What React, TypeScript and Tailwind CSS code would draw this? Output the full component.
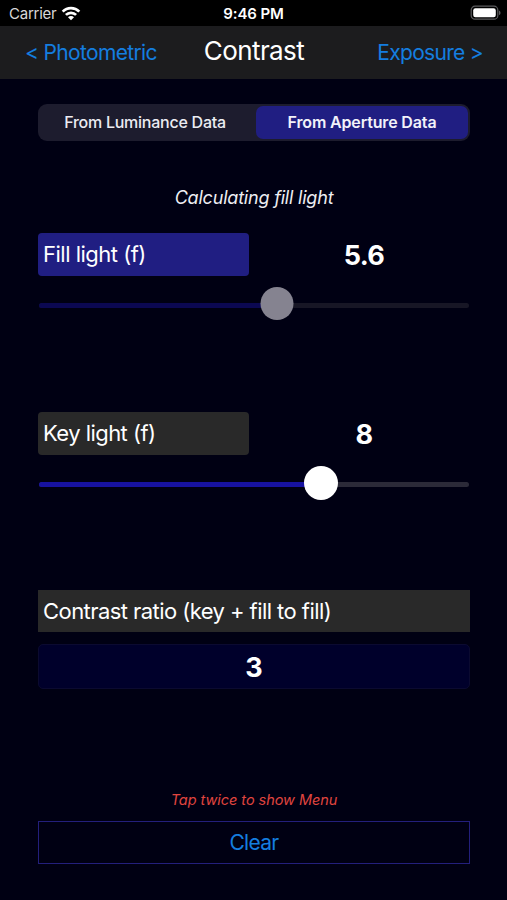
import React from "react";

function WifiIcon() {
  return (
    <svg width="20" height="15" viewBox="0 0 20 15" className="ml-[5px] shrink-0">
      <g fill="none" stroke="#fff" strokeWidth="2.7">
        <path d="M1.7 5.6a11.6 11.6 0 0 1 16.6 0" />
        <path d="M4.9 8.9a7.2 7.2 0 0 1 10.2 0" />
      </g>
      <path d="M10 14.2 7 11.2a4.2 4.2 0 0 1 6 0z" fill="#fff" />
    </svg>
  );
}

function BatteryIcon() {
  return (
    <svg width="32" height="16" viewBox="0 0 32 16" className="shrink-0">
      <rect x="1.2" y="1.2" width="26.6" height="13" rx="3.8" fill="none" stroke="#5c5c5e" strokeWidth="1.2" />
      <rect x="3.2" y="3.2" width="22.6" height="9" rx="2.2" fill="#fff" />
      <path d="M29 5.4c2 .8 2 4 0 4.7z" fill="#5c5c5e" />
    </svg>
  );
}

type SliderProps = { value: number; fill: string; rest: string; thumb: string };

function Slider({ value, fill, rest, thumb }: SliderProps) {
  return (
    <div className="relative flex h-[33px] items-center">
      <div className={`mx-px mt-[3px] h-[5px] flex-1 overflow-hidden rounded-full ${rest}`}>
        <div className={`h-full ${fill}`} style={{ width: `${value - 1}px` }} />
      </div>
      <div
        className={`absolute top-0 -translate-x-1/2 rounded-full ${thumb}`}
        style={{ left: `${value}px` }}
      />
    </div>
  );
}

type FieldProps = { label: string; value: string; color: string; tracking: string };

function Field({ label, value, color, tracking }: FieldProps) {
  return (
    <div className="flex h-[43px] items-center">
      <div className={`flex h-full w-[211px] items-center rounded-[4px] pl-[5px] ${color}`}>
        <span className={`whitespace-nowrap text-[22px] ${tracking}`}>{label}</span>
      </div>
      <div className="flex flex-1 justify-center pl-[9px] pt-[3px] text-[27px] font-bold tracking-[-0.6px]">{value}</div>
    </div>
  );
}

export default function App() {
  return (
    <div className="flex h-[900px] w-[507px] flex-col overflow-hidden bg-[#000013] font-['Inter',sans-serif] text-white">
      <div className="grid h-[26px] grid-cols-3 items-center bg-black text-[15px]">
        <div className="flex items-center pl-[9px] text-[#d8d8d8]">
          <span className="pt-[2px] tracking-[-0.25px]">Carrier</span>
          <WifiIcon />
        </div>
        <div className="pt-[2px] text-center font-semibold tracking-[-0.1px]">9:46 PM</div>
        <div className="flex justify-end pr-[5px]">
          <BatteryIcon />
        </div>
      </div>

      <div className="grid h-[53px] grid-cols-[1fr_auto_1fr] items-center bg-[#1c1c1e] pl-[25px] pr-[24px] text-[21px] text-[#147ee0]">
        <button className="whitespace-nowrap text-left tracking-[-0.65px]">&lt; Photometric</button>
        <h1 className="pb-[3px] text-[26px] leading-none tracking-[-0.6px] text-white">Contrast</h1>
        <button className="whitespace-nowrap text-right tracking-[-0.7px]">Exposure &gt;</button>
      </div>

      <main className="flex flex-1 flex-col pl-[38px] pr-[37px] pt-[25px]">
        <div className="flex h-[37px] rounded-[9px] bg-[#1d1c2e] p-[2px] text-[16px]">
          <button className="flex w-[216px] items-center justify-center whitespace-nowrap pb-[2px] pr-[6px] font-medium tracking-[-0.25px] text-[#ececf2]">
            From Luminance Data
          </button>
          <button className="flex flex-1 items-center justify-center whitespace-nowrap rounded-[7px] bg-[#201e82] pb-[2px] font-semibold tracking-[-0.15px] text-[#f2f2fa]">
            From Aperture Data
          </button>
        </div>

        <p className="mt-[45px] h-[24px] text-center text-[18px] italic leading-[24px] tracking-[-0.2px] text-[#eeeef2]">
          Calculating fill light
        </p>

        <section className="mt-[23px]">
          <Field label="Fill light (f)" value="5.6" color="bg-[#201e82]" tracking="tracking-[-0.5px]" />
          <div className="mt-[11px]">
            <Slider value={238.5} fill="bg-[#0b0852]" rest="bg-[#171625]" thumb="size-[33px] bg-[#858390]" />
          </div>
        </section>

        <section className="mt-[92px]">
          <Field label="Key light (f)" value="8" color="bg-[#292929]" tracking="tracking-[-0.55px]" />
          <div className="mt-[11px]">
            <Slider value={282.5} fill="bg-[#1712a0]" rest="bg-[#2b2a38]" thumb="size-[34px] bg-white" />
          </div>
        </section>

        <section className="mt-[91px]">
          <div className="flex h-[42px] items-center bg-[#292929] pl-[5px] text-[22px] tracking-[-0.56px]">
            Contrast ratio (key + fill to fill)
          </div>
          <div className="mt-[12px] flex h-[45px] items-center justify-center rounded-[5px] border border-[#0b0a30] bg-[#00002b] pt-[3px] text-[27px] font-bold">
            3
          </div>
        </section>

        <p className="mt-[101px] h-[20px] text-center text-[14.5px] italic leading-[20px] tracking-[-0.05px] text-[#e0453f]">
          Tap twice to show Menu
        </p>
        <button className="mt-[11px] flex h-[43px] items-center justify-center border border-[#231f7c] text-[21px] tracking-[-0.7px] text-[#147ee0]">
          Clear
        </button>
      </main>
    </div>
  );
}
